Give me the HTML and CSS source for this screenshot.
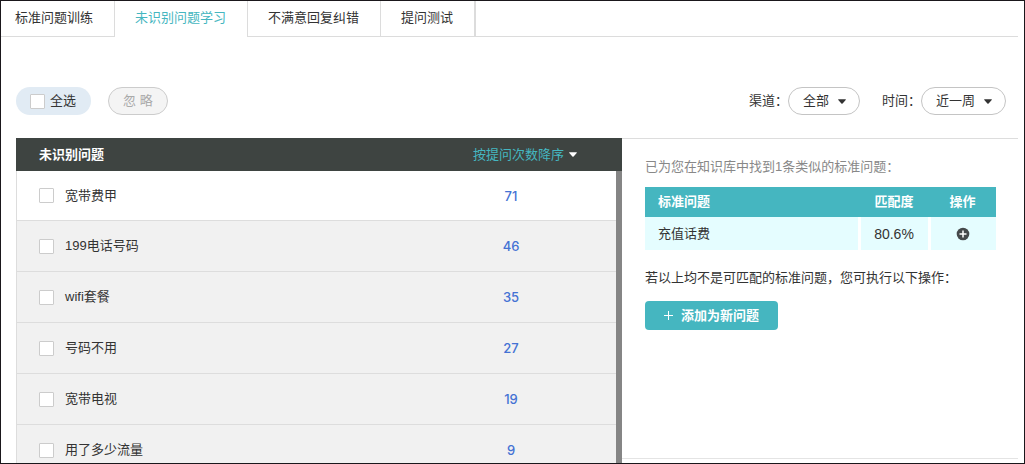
FILE: index.html
```html
<!DOCTYPE html>
<html lang="zh-CN">
<head>
<meta charset="utf-8">
<title>未识别问题学习</title>
<link rel="stylesheet" href="styles.css">
</head>
<body>
<div class="frame">
  <nav class="tabs">
    <a class="tab" href="#train">标准问题训练</a>
    <a class="tab tab-active" href="#learn" aria-current="page">未识别问题学习</a>
    <a class="tab" href="#correct">不满意回复纠错</a>
    <a class="tab" href="#test">提问测试</a>
  </nav>
  <main class="main">
    <div class="toolbar">
      <label class="select-all"><input class="check" type="checkbox">全选</label>
      <button class="ignore" type="button" disabled>忽 略</button>
      <div class="filters">
        <div class="filter">
          <label for="channel">渠道：</label>
          <span class="dropdown">
            <select id="channel"><option>全部</option></select>
            <svg class="caret" viewBox="0 0 8 5" aria-hidden="true"><path d="M.5.3h7q.6.2.2.7L4.6 4.6q-.6.5-1.2 0L.3 1Q-.1.5.5.3z"/></svg>
          </span>
        </div>
        <div class="filter">
          <label for="period">时间：</label>
          <span class="dropdown">
            <select id="period"><option>近一周</option></select>
            <svg class="caret" viewBox="0 0 8 5" aria-hidden="true"><path d="M.5.3h7q.6.2.2.7L4.6 4.6q-.6.5-1.2 0L.3 1Q-.1.5.5.3z"/></svg>
          </span>
        </div>
      </div>
    </div>
    <div class="content">
      <section class="list">
        <div class="list-head">
          <h2 class="list-title">未识别问题</h2>
          <button class="sort" type="button">按提问次数降序
            <svg class="sort-caret" viewBox="0 0 8 5" aria-hidden="true"><path d="M.5.3h7q.6.2.2.7L4.6 4.6q-.6.5-1.2 0L.3 1Q-.1.5.5.3z"/></svg>
          </button>
        </div>
        <div class="list-body">
          <table class="questions">
            <tbody>
              <tr class="current"><td><label class="question"><input class="check" type="checkbox">宽带费甲</label></td><td class="count"><a href="#q1">71</a></td></tr>
              <tr><td><label class="question"><input class="check" type="checkbox">199电话号码</label></td><td class="count"><a href="#q2">46</a></td></tr>
              <tr><td><label class="question"><input class="check" type="checkbox">wifi套餐</label></td><td class="count"><a href="#q3">35</a></td></tr>
              <tr><td><label class="question"><input class="check" type="checkbox">号码不用</label></td><td class="count"><a href="#q4">27</a></td></tr>
              <tr><td><label class="question"><input class="check" type="checkbox">宽带电视</label></td><td class="count"><a href="#q5">19</a></td></tr>
              <tr><td><label class="question"><input class="check" type="checkbox">用了多少流量</label></td><td class="count"><a href="#q6">9</a></td></tr>
            </tbody>
          </table>
          <div class="scrollbar"></div>
        </div>
      </section>
      <section class="panel">
        <p class="found">已为您在知识库中找到1条类似的标准问题：</p>
        <table class="matches">
          <thead>
            <tr><th class="match-name">标准问题</th><th class="match-rate">匹配度</th><th class="match-action">操作</th></tr>
          </thead>
          <tbody>
            <tr>
              <td class="match-name">充值话费</td>
              <td class="match-rate rate">80.6%</td>
              <td class="match-action">
                <button class="add-match" type="button" aria-label="添加">
                  <svg viewBox="0 0 14 14" aria-hidden="true"><circle cx="7" cy="7" r="6.3" fill="#45494b"/><path d="M7 3.5v7M3.5 7h7" stroke="#fff" stroke-width="1.5"/></svg>
                </button>
              </td>
            </tr>
          </tbody>
        </table>
        <p class="hint">若以上均不是可匹配的标准问题，您可执行以下操作：</p>
        <button class="add-new" type="button">
          <svg class="plus" viewBox="0 0 9 9" aria-hidden="true"><path d="M4.5 0v9M0 4.5h9" stroke="#fff" stroke-width="1"/></svg>添加为新问题
        </button>
      </section>
    </div>
  </main>
</div>
</body>
</html>
```
FILE: styles.css
```css
* {
  box-sizing: border-box;
}

body {
  margin: 0;
  font: 13px/20px "Liberation Sans", "Noto Sans CJK SC", sans-serif;
  color: #333;
  background: #fff;
}

a {
  color: inherit;
  text-decoration: none;
}

button,
select {
  font: inherit;
  color: inherit;
}

button {
  padding: 0;
  border: 0;
  background: none;
}

.frame {
  display: flex;
  flex-direction: column;
  height: 100vh;
  border: 1px solid #1a171b;
}

.tabs {
  display: flex;
  margin-right: 6px;
  border-bottom: 1px solid #dcdcdc;
}

.tab {
  height: 35px;
  padding: 7px 21px 0 20px;
  border-right: 1px solid #dcdcdc;
}

.tab:first-child {
  padding-left: 14px;
}

.tab:last-child {
  border-right-width: 2px;
}

.tab-active {
  margin-bottom: -1px;
  height: 36px;
  color: #45b6c0;
  background: #fff;
}

.main {
  display: flex;
  flex: 1;
  flex-direction: column;
  min-height: 0;
  padding: 50px 6px 0 15px;
}

.toolbar {
  display: flex;
  gap: 17px;
  height: 28px;
  margin-bottom: 23px;
  padding-right: 12px;
}

.check {
  flex: none;
  appearance: none;
  width: 15px;
  height: 15px;
  margin: 0;
  border: 1px solid #ccc;
  border-radius: 1px;
  background: #fff;
}

.select-all {
  display: flex;
  align-items: center;
  gap: 5px;
  padding: 0 15px 0 14px;
  border-radius: 14px;
  background: #e1ebf4;
}

.ignore {
  padding: 0 14px;
  border: 1px solid #ccc;
  border-radius: 14px;
  color: #aaa;
  background: #f4f4f4;
}

.filters {
  display: flex;
  gap: 22px;
  margin-left: auto;
}

.filter {
  display: flex;
  align-items: center;
}

.dropdown {
  position: relative;
}

.dropdown select {
  display: block;
  appearance: none;
  height: 28px;
  padding: 0 29px 0 14px;
  border: 1px solid #c4c4c4;
  border-radius: 14px;
  background: #fff;
}

.caret {
  position: absolute;
  top: 12px;
  right: 14px;
  width: 8px;
  height: 5px;
  fill: #333;
  pointer-events: none;
}

.content {
  display: grid;
  flex: 1;
  grid-template-columns: 606fr 396fr;
  min-height: 0;
}

.list {
  display: flex;
  flex-direction: column;
  min-height: 0;
}

.list-head {
  display: flex;
  flex: none;
  align-items: center;
  justify-content: space-between;
  height: 33px;
  padding: 0 45px 0 23px;
  background: #3e4441;
}

.list-title {
  margin: 0;
  font-size: 13px;
  font-weight: bold;
  color: #fff;
}

.sort {
  display: flex;
  align-items: center;
  gap: 5px;
  color: #45b6c0;
}

.sort-caret {
  width: 8px;
  height: 5px;
  fill: #fff;
}

.list-body {
  display: flex;
  flex: 1;
  min-height: 0;
  overflow: hidden;
}

.questions {
  flex: 1;
  align-self: flex-start;
  border-collapse: separate;
  border-spacing: 0;
  border-left: 1px solid #ddd;
}

.questions td {
  height: 51px;
  padding: 0;
  border-bottom: 1px solid #ddd;
  background: #f1f1f1;
}

.questions .current td {
  height: 50px;
  background: #fff;
}

.question {
  display: flex;
  align-items: center;
  gap: 11px;
  padding-left: 22px;
}

.questions .count {
  width: 210px;
  text-align: center;
  font: 500 13px/20px Inter, sans-serif;
  color: #4472d4;
}

.scrollbar {
  width: 6px;
  background: #858585;
}

.panel {
  margin-bottom: 4px;
  padding: 18px 22px 0 23px;
  border-top: 1px solid #ddd;
  border-bottom: 1px solid #e4e4e4;
}

.found {
  margin: 0 0 10px;
  color: #888;
}

.matches {
  width: 100%;
  border-collapse: collapse;
  table-layout: fixed;
}

.matches th {
  height: 30px;
  padding: 0;
  color: #fff;
  background: #45b6c0;
}

.matches td {
  height: 33px;
  padding: 0;
  background: #e5fdff;
}

.matches .match-name {
  padding-left: 13px;
  text-align: left;
}

.matches .match-rate {
  width: 70px;
  text-align: center;
}

.matches .match-action {
  width: 67px;
  text-align: center;
}

.matches td.match-rate {
  border-right: 3px solid #fff;
  border-left: 3px solid #fff;
}

.matches .rate {
  font-size: 14px;
}

.add-match {
  display: block;
  width: 14px;
  height: 14px;
  margin: 0 auto;
}

.add-match svg {
  display: block;
}

.hint {
  margin: 18px 0 13px;
}

.add-new {
  display: flex;
  align-items: center;
  gap: 8px;
  height: 29px;
  padding: 0 19px;
  border-radius: 4px;
  font-weight: bold;
  color: #fff;
  background: #45b6c0;
}

.plus {
  width: 9px;
  height: 9px;
}
```
